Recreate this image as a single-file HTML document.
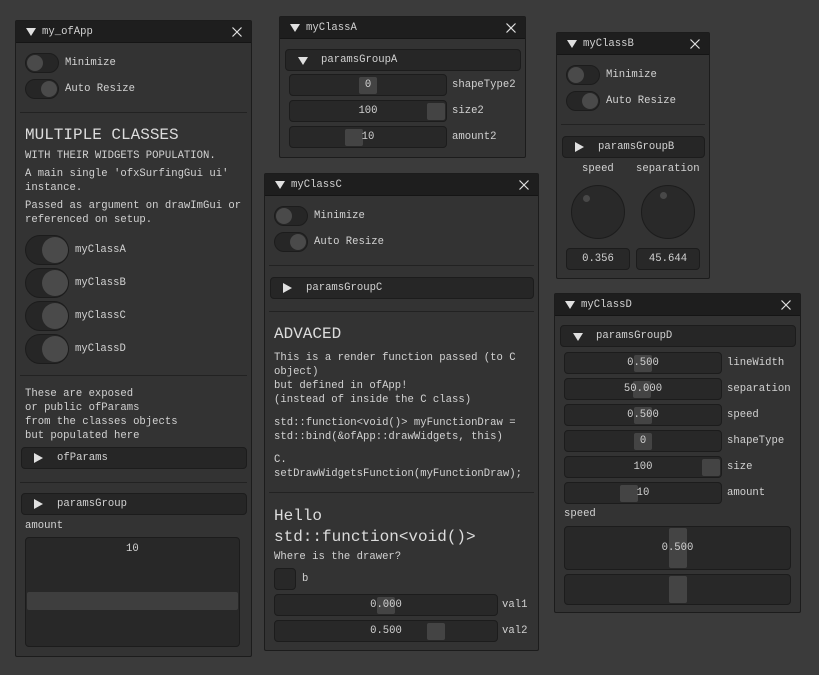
<!DOCTYPE html>
<html><head><meta charset="utf-8"><style>
*{margin:0;padding:0;box-sizing:border-box}
body{width:819px;height:675px;background:#3b3b3b;position:relative;overflow:hidden;font-family:"Liberation Mono",monospace;font-size:10.6px;color:#d2d2d2}
div,span,svg{position:absolute}
.w{background:#333;border:1px solid #1c1c1c;border-radius:2px}
.t{background:#1e1e1e;border-bottom:1px solid #151515;height:22px;left:0;right:0;top:0}
.t span{top:4px;line-height:14px}
.tri{width:0;height:0;border-left:5px solid transparent;border-right:5px solid transparent;border-top:8px solid #e0e0e0}
.rt{width:0;height:0;border-top:5.5px solid transparent;border-bottom:5.5px solid transparent;border-left:9px solid #e0e0e0}
.x{right:9px;top:6px;width:10px;height:10px}
.l{line-height:14px;white-space:pre}
.tg{width:34px;height:20px;border-radius:10px;background:#262626;border:1px solid #1c1c1c}
.tg i{position:absolute;top:1px;width:16px;height:16px;border-radius:50%;background:#4a4a4a}
.bt{width:44px;height:30px;border-radius:15px;background:#262626;border:1px solid #1c1c1c}
.bt i{position:absolute;top:1px;left:16px;width:26px;height:26px;border-radius:50%;background:#4a4a4a}
.sep{height:1px;background:#222}
.hd{background:#262626;border:1px solid #1c1c1c;border-radius:4px;height:22px}
.fr{background:#282828;border:1px solid #1c1c1c;border-radius:4px;height:22px}
.g{background:#444;border-radius:2px;top:2px;height:17px;width:18px}
.fr .v{left:0;right:0;top:3px;text-align:center;line-height:14px}
h{position:absolute;font-size:16px;line-height:18px;white-space:pre;color:#dcdcdc}
</style></head><body>

<!-- my_ofApp -->
<div class="w" style="left:15px;top:20px;width:237px;height:637px">
 <div class="t"><div class="tri" style="left:10px;top:7px"></div><span style="left:26px">my_ofApp</span><svg class="x" viewBox="0 0 10 10"><path d="M0.5 0.5L9.5 9.5M9.5 0.5L0.5 9.5" stroke="#e0e0e0" stroke-width="1.2"/></svg></div>
</div>
<div class="tg" style="left:25px;top:53px"><i style="left:1px"></i></div><span class="l" style="left:65px;top:56px">Minimize</span>
<div class="tg" style="left:25px;top:79px"><i style="left:15px"></i></div><span class="l" style="left:65px;top:82px">Auto Resize</span>
<div class="sep" style="left:20px;top:112px;width:227px"></div>
<h style="left:25px;top:126px">MULTIPLE CLASSES</h>
<span class="l" style="left:25px;top:149px">WITH THEIR WIDGETS POPULATION.</span>
<span class="l" style="left:25px;top:167px">A main single 'ofxSurfingGui ui'
instance.</span>
<span class="l" style="left:25px;top:199px">Passed as argument on drawImGui or
referenced on setup.</span>
<div class="bt" style="left:25px;top:235px"><i></i></div><span class="l" style="left:75px;top:243px">myClassA</span>
<div class="bt" style="left:25px;top:268px"><i></i></div><span class="l" style="left:75px;top:276px">myClassB</span>
<div class="bt" style="left:25px;top:301px"><i></i></div><span class="l" style="left:75px;top:309px">myClassC</span>
<div class="bt" style="left:25px;top:334px"><i></i></div><span class="l" style="left:75px;top:342px">myClassD</span>
<div class="sep" style="left:20px;top:375px;width:227px"></div>
<span class="l" style="left:25px;top:387px">These are exposed
or public ofParams
from the classes objects
but populated here</span>
<div class="hd" style="left:21px;top:447px;width:226px"><div class="rt" style="left:12px;top:5px"></div><span class="l" style="left:35px;top:3px">ofParams</span></div>
<div class="sep" style="left:20px;top:482px;width:227px"></div>
<div class="hd" style="left:21px;top:493px;width:226px"><div class="rt" style="left:12px;top:5px"></div><span class="l" style="left:35px;top:3px">paramsGroup</span></div>
<span class="l" style="left:25px;top:519px">amount</span>
<div class="fr" style="left:25px;top:537px;width:215px;height:110px"><span class="l" style="left:100px;top:4px">10</span><div style="left:1px;top:54px;width:211px;height:18px;background:#3e3e3e;border-radius:2px"></div></div>

<!-- myClassA -->
<div class="w" style="left:279px;top:16px;width:247px;height:142px">
 <div class="t"><div class="tri" style="left:10px;top:7px"></div><span style="left:26px">myClassA</span><svg class="x" viewBox="0 0 10 10"><path d="M0.5 0.5L9.5 9.5M9.5 0.5L0.5 9.5" stroke="#e0e0e0" stroke-width="1.2"/></svg></div>
</div>
<div class="hd" style="left:285px;top:49px;width:236px"><div class="tri" style="left:12px;top:7px"></div><span class="l" style="left:35px;top:3px">paramsGroupA</span></div>
<div class="fr" style="left:289px;top:74px;width:158px"><div class="g" style="left:69px"></div><span class="v">0</span></div><span class="l" style="left:452px;top:78px">shapeType2</span>
<div class="fr" style="left:289px;top:100px;width:158px"><div class="g" style="left:137px"></div><span class="v">100</span></div><span class="l" style="left:452px;top:104px">size2</span>
<div class="fr" style="left:289px;top:126px;width:158px"><div class="g" style="left:55px"></div><span class="v">10</span></div><span class="l" style="left:452px;top:130px">amount2</span>

<!-- myClassB -->
<div class="w" style="left:556px;top:32px;width:154px;height:247px">
 <div class="t"><div class="tri" style="left:10px;top:7px"></div><span style="left:26px">myClassB</span><svg class="x" viewBox="0 0 10 10"><path d="M0.5 0.5L9.5 9.5M9.5 0.5L0.5 9.5" stroke="#e0e0e0" stroke-width="1.2"/></svg></div>
</div>
<div class="tg" style="left:566px;top:65px"><i style="left:1px"></i></div><span class="l" style="left:606px;top:68px">Minimize</span>
<div class="tg" style="left:566px;top:91px"><i style="left:15px"></i></div><span class="l" style="left:606px;top:94px">Auto Resize</span>
<div class="sep" style="left:561px;top:124px;width:144px"></div>
<div class="hd" style="left:562px;top:136px;width:143px"><div class="rt" style="left:12px;top:5px"></div><span class="l" style="left:35px;top:3px">paramsGroupB</span></div>
<span class="l" style="left:582px;top:162px">speed</span>
<span class="l" style="left:636px;top:162px">separation</span>
<div style="left:571px;top:185px;width:54px;height:54px;border-radius:50%;background:#292929;border:1px solid #1c1c1c"><i style="position:absolute;left:11px;top:9px;width:7px;height:7px;border-radius:50%;background:#484848"></i></div>
<div style="left:641px;top:185px;width:54px;height:54px;border-radius:50%;background:#292929;border:1px solid #1c1c1c"><i style="position:absolute;left:18px;top:6px;width:7px;height:7px;border-radius:50%;background:#484848"></i></div>
<div class="fr" style="left:566px;top:248px;width:64px"><span class="v">0.356</span></div>
<div class="fr" style="left:636px;top:248px;width:64px"><span class="v">45.644</span></div>

<!-- myClassC -->
<div class="w" style="left:264px;top:173px;width:275px;height:478px">
 <div class="t"><div class="tri" style="left:10px;top:7px"></div><span style="left:26px">myClassC</span><svg class="x" viewBox="0 0 10 10"><path d="M0.5 0.5L9.5 9.5M9.5 0.5L0.5 9.5" stroke="#e0e0e0" stroke-width="1.2"/></svg></div>
</div>
<div class="tg" style="left:274px;top:206px"><i style="left:1px"></i></div><span class="l" style="left:314px;top:209px">Minimize</span>
<div class="tg" style="left:274px;top:232px"><i style="left:15px"></i></div><span class="l" style="left:314px;top:235px">Auto Resize</span>
<div class="sep" style="left:269px;top:265px;width:265px"></div>
<div class="hd" style="left:270px;top:277px;width:264px"><div class="rt" style="left:12px;top:5px"></div><span class="l" style="left:35px;top:3px">paramsGroupC</span></div>
<div class="sep" style="left:269px;top:311px;width:265px"></div>
<h style="left:274px;top:325px">ADVACED</h>
<span class="l" style="left:274px;top:351px">This is a render function passed (to C
object)
but defined in ofApp!
(instead of inside the C class)</span>
<span class="l" style="left:274px;top:416px">std::function&lt;void()&gt; myFunctionDraw =
std::bind(&amp;ofApp::drawWidgets, this)</span>
<span class="l" style="left:274px;top:453px">C.
setDrawWidgetsFunction(myFunctionDraw);</span>
<div class="sep" style="left:269px;top:492px;width:265px"></div>
<h style="left:274px;top:506px;line-height:21px">Hello
std::function&lt;void()&gt;</h>
<span class="l" style="left:274px;top:550px">Where is the drawer?</span>
<div class="fr" style="left:274px;top:568px;width:22px;height:22px"></div><span class="l" style="left:302px;top:572px">b</span>
<div class="fr" style="left:274px;top:594px;width:224px"><div class="g" style="left:102px"></div><span class="v">0.000</span></div><span class="l" style="left:502px;top:598px">val1</span>
<div class="fr" style="left:274px;top:620px;width:224px"><div class="g" style="left:152px"></div><span class="v">0.500</span></div><span class="l" style="left:502px;top:624px">val2</span>

<!-- myClassD -->
<div class="w" style="left:554px;top:293px;width:247px;height:320px">
 <div class="t"><div class="tri" style="left:10px;top:7px"></div><span style="left:26px">myClassD</span><svg class="x" viewBox="0 0 10 10"><path d="M0.5 0.5L9.5 9.5M9.5 0.5L0.5 9.5" stroke="#e0e0e0" stroke-width="1.2"/></svg></div>
</div>
<div class="hd" style="left:560px;top:325px;width:236px"><div class="tri" style="left:12px;top:7px"></div><span class="l" style="left:35px;top:3px">paramsGroupD</span></div>
<div class="fr" style="left:564px;top:352px;width:158px"><div class="g" style="left:69px"></div><span class="v">0.500</span></div><span class="l" style="left:727px;top:356px">lineWidth</span>
<div class="fr" style="left:564px;top:378px;width:158px"><div class="g" style="left:68px"></div><span class="v">50.000</span></div><span class="l" style="left:727px;top:382px">separation</span>
<div class="fr" style="left:564px;top:404px;width:158px"><div class="g" style="left:69px"></div><span class="v">0.500</span></div><span class="l" style="left:727px;top:408px">speed</span>
<div class="fr" style="left:564px;top:430px;width:158px"><div class="g" style="left:69px"></div><span class="v">0</span></div><span class="l" style="left:727px;top:434px">shapeType</span>
<div class="fr" style="left:564px;top:456px;width:158px"><div class="g" style="left:137px"></div><span class="v">100</span></div><span class="l" style="left:727px;top:460px">size</span>
<div class="fr" style="left:564px;top:482px;width:158px"><div class="g" style="left:55px"></div><span class="v">10</span></div><span class="l" style="left:727px;top:486px">amount</span>
<span class="l" style="left:564px;top:507px">speed</span>
<div class="fr" style="left:564px;top:526px;width:227px;height:44px"><div class="g" style="left:104px;top:1px;height:40px"></div><span class="v" style="top:14px">0.500</span></div>
<div class="fr" style="left:564px;top:574px;width:227px;height:31px"><div class="g" style="left:104px;top:1px;height:27px"></div></div>

</body></html>
